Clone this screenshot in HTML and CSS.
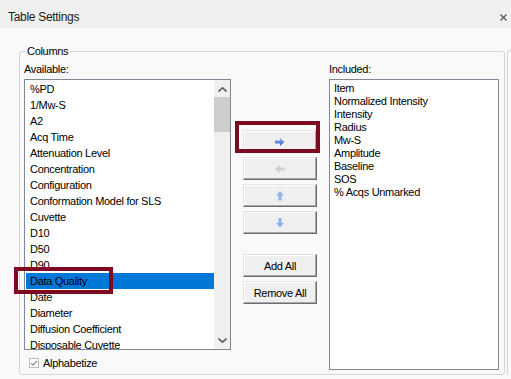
FILE: index.html
```html
<!DOCTYPE html>
<html lang="en">
  <head>
    <meta charset="UTF-8" />
    <title>Table Settings</title>
    <link rel="stylesheet" href="styles.css">
  </head>
  <body>
    <div class="window">
      <div class="titleBar">
        <span class="title">Table Settings</span>
        <svg class="closeIcon" width="7" height="7" viewBox="0 0 7 7">
          <path d="M0.5 0.5L6.5 6.5M6.5 0.5L0.5 6.5" stroke="#5a5a5a" stroke-width="1.4" />
        </svg>
      </div>

      <div class="content">
        <fieldset class="groupBox">
          <legend>Columns</legend>
          <div class="columns">
            <div class="leftCol">
              <div class="label">Available:</div>
              <div class="listWrap">
                <div class="listBox available">
                  <div class="items">
                    <div class="item">%PD</div>
                    <div class="item">1/Mw-S</div>
                    <div class="item">A2</div>
                    <div class="item">Acq Time</div>
                    <div class="item">Attenuation Level</div>
                    <div class="item">Concentration</div>
                    <div class="item">Configuration</div>
                    <div class="item">Conformation Model for SLS</div>
                    <div class="item">Cuvette</div>
                    <div class="item">D10</div>
                    <div class="item">D50</div>
                    <div class="item">D90</div>
                    <div class="item selected">Data Quality</div>
                    <div class="item">Date</div>
                    <div class="item">Diameter</div>
                    <div class="item">Diffusion Coefficient</div>
                    <div class="item">Disposable Cuvette</div>
                  </div>
                  <div class="scrollBar">
                    <svg class="scrollArrow" width="9" height="5" viewBox="0 0 9 5">
                      <path d="M0.5 4.5L4.5 0.8L8.5 4.5" fill="none" stroke="#606060" stroke-width="1.6" />
                    </svg>
                    <div class="scrollTrack">
                      <div class="scrollThumb"></div>
                    </div>
                    <svg class="scrollArrow" width="9" height="5" viewBox="0 0 9 5">
                      <path d="M0.5 0.5L4.5 4.2L8.5 0.5" fill="none" stroke="#606060" stroke-width="1.6" />
                    </svg>
                  </div>
                </div>
                <div class="mark markItem"></div>
              </div>
              <label class="checkRow">
                <span class="checkBox">
                  <svg width="8" height="8" viewBox="0 0 8 8">
                    <path d="M1 4.2L3 6.2L7 1.8" fill="none" stroke="#8a8a8a" stroke-width="1.2" />
                  </svg>
                </span>
                Alphabetize
              </label>
            </div>

            <div class="midCol">
              <div class="btnWrap">
                <button class="btn">
                  <svg width="10" height="8" viewBox="0 0 10 8">
                    <defs>
                      <linearGradient id="gRight" x1="0" y1="0" x2="0" y2="1">
                        <stop offset="0" stop-color="#8fb3ee" />
                        <stop offset="1" stop-color="#2f63cf" />
                      </linearGradient>
                    </defs>
                    <path d="M0 2.5H5V0L9.5 4L5 8V5.5H0Z" fill="url(#gRight)" />
                  </svg>
                </button>
                <div class="mark markBtn"></div>
              </div>
              <button class="btn">
                <svg width="10" height="8" viewBox="0 0 10 8">
                  <path d="M9.5 2.5H4.5V0L0 4L4.5 8V5.5H9.5Z" fill="#cfcfcf" />
                </svg>
              </button>
              <button class="btn">
                <svg width="8" height="10" viewBox="0 0 8 10">
                  <path d="M2.5 9.5V4.5H0L4 0L8 4.5H5.5V9.5Z" fill="#8db4ee" />
                </svg>
              </button>
              <button class="btn">
                <svg width="8" height="10" viewBox="0 0 8 10">
                  <path d="M2.5 0V5H0L4 9.5L8 5H5.5V0Z" fill="#8db4ee" />
                </svg>
              </button>
              <button class="btn textBtn addAll">Add All</button>
              <button class="btn textBtn">Remove All</button>
            </div>

            <div class="rightCol">
              <div class="label">Included:</div>
              <div class="listBox included">
                <div class="smallItem">Item</div>
                <div class="smallItem">Normalized Intensity</div>
                <div class="smallItem">Intensity</div>
                <div class="smallItem">Radius</div>
                <div class="smallItem">Mw-S</div>
                <div class="smallItem">Amplitude</div>
                <div class="smallItem">Baseline</div>
                <div class="smallItem">SOS</div>
                <div class="smallItem">% Acqs Unmarked</div>
              </div>
            </div>
          </div>
        </fieldset>
        <div class="nextGroup"></div>
      </div>
    </div>
  </body>
</html>
```

FILE: styles.css
```css
body {
  margin: 0;
  background: #f9f9f9;
  font-family: "Liberation Sans", Arial, sans-serif;
  color: #000;
}
.window {
  width: 511px;
  height: 379px;
  overflow: hidden;
}
.titleBar {
  height: 28px;
  background: #f0f0f0;
  display: flex;
  align-items: center;
  justify-content: space-between;
  padding: 0 4px 0 8px;
  box-sizing: border-box;
}
.title {
  font-size: 12px;
  letter-spacing: -0.3px;
  color: #1a1a1a;
  margin-top: 6px;
}
.closeIcon {
  margin-top: 7px;
}

.content {
  display: flex;
  padding: 16px 0 0 19px;
}
.groupBox {
  flex-shrink: 0;
  margin: 0;
  width: 486px;
  box-sizing: border-box;
  border: 1px solid #d5d5d5;
  border-radius: 3px;
  padding: 3px 3px 3px 4px;
  min-width: 0;
}
.groupBox legend {
  font-size: 11px;
  line-height: 15px;
  letter-spacing: -0.3px;
  padding: 0 2px;
  margin-left: 1px;
}
.nextGroup {
  flex-shrink: 0;
  margin-left: 2px;
  margin-top: 6px;
  width: 10px;
  height: 324px;
  border-left: 1px solid #d5d5d5;
  border-top: 1px solid #d5d5d5;
  border-top-left-radius: 3px;
}

.columns {
  display: flex;
  gap: 12px;
}
.label {
  font-size: 11px;
  line-height: 15px;
  letter-spacing: -0.3px;
  margin-bottom: 2px;
}

.leftCol {
  width: 207px;
}
.listWrap {
  position: relative;
}
.listBox {
  background: #fff;
  border: 1px solid #828790;
  box-sizing: border-box;
}
.available {
  height: 271px;
  display: flex;
  overflow: hidden;
}
.items {
  flex: 1;
  padding: 1px 0 0 1px;
  overflow: hidden;
}
.item {
  height: 16px;
  line-height: 16px;
  padding-left: 4px;
  font-size: 11px;
  letter-spacing: -0.3px;
  white-space: nowrap;
}
.item.selected {
  background: #0078d7;
}
.scrollBar {
  width: 16px;
  background: #f0f0f0;
  display: flex;
  flex-direction: column;
  align-items: center;
}
.scrollArrow {
  margin: 7px 0 5px;
}
.scrollArrow:last-child {
  margin: 6px 0 6px;
}
.scrollTrack {
  flex: 1;
  width: 100%;
}
.scrollThumb {
  height: 35px;
  background: #cdcdcd;
}

.mark {
  position: absolute;
  border: 4px solid #7d0a22;
  box-sizing: border-box;
}
.markItem {
  left: -10px;
  top: 188px;
  width: 99px;
  height: 27px;
}

.checkRow {
  display: flex;
  align-items: center;
  gap: 4px;
  margin: 5px 0 0 5px;
  height: 15px;
  font-size: 11px;
  letter-spacing: -0.3px;
}
.checkBox {
  width: 10px;
  height: 10px;
  border: 1px solid #bdbdbd;
  box-sizing: border-box;
  background: #fff;
  display: flex;
  align-items: center;
  justify-content: center;
}

.midCol {
  width: 74px;
  padding-top: 68px;
  display: flex;
  flex-direction: column;
  gap: 4px;
}
.btnWrap {
  position: relative;
  display: flex;
}
.markBtn {
  left: -8px;
  top: -9px;
  width: 85px;
  height: 32px;
}
.btn {
  width: 74px;
  height: 23px;
  padding: 0;
  margin: 0;
  background: #efefef;
  border: 1px solid;
  border-color: #e2e2e2 #6d6d6d #6d6d6d #e2e2e2;
  box-shadow: inset -1px -1px #a8a8a8, inset 1px 1px #fff;
  display: flex;
  align-items: center;
  justify-content: center;
  font-family: "Liberation Sans", Arial, sans-serif;
  font-size: 11px;
  letter-spacing: -0.3px;
  color: #000;
}
.addAll {
  margin-top: 16px;
}

.rightCol {
  width: 170px;
}
.included {
  height: 291px;
  padding: 2px 0 0 4px;
}
.smallItem {
  height: 13px;
  line-height: 13px;
  font-size: 11px;
  letter-spacing: -0.3px;
  white-space: nowrap;
}
```
